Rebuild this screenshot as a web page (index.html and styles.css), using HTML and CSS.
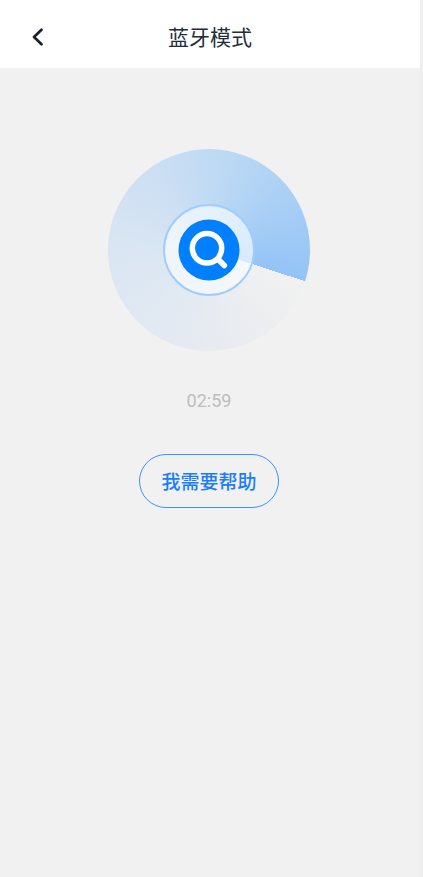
FILE: index.html
```html
<!DOCTYPE html>
<html lang="zh-CN">
<head>
<meta charset="utf-8">
<meta name="viewport" content="width=device-width, initial-scale=1">
<title>蓝牙模式</title>
<link rel="stylesheet" href="styles.css">
</head>
<body>
<div class="screen">
  <header class="bar">
    <button class="back" type="button" aria-label="返回">
      <svg width="12" height="18" viewBox="0 0 12 18" fill="none" stroke="#17202e" stroke-width="2.6" stroke-linecap="round" stroke-linejoin="round"><path d="M9.500 1.700 2 9l7.500 7.300"/></svg>
    </button>
    <h1 class="title">蓝牙模式</h1>
  </header>
  <main class="content">
    <div class="radar">
      <div class="ring">
        <svg class="search" viewBox="0 0 62 62" fill="none">
          <circle cx="31" cy="31" r="30.5" fill="#007fff"/>
          <circle cx="29" cy="29.300" r="14.700" stroke="#fff" stroke-width="5.500"/>
          <path d="M40 40 46.300 46.500" stroke="#fff" stroke-width="5.600" stroke-linecap="round"/>
        </svg>
      </div>
    </div>
    <time class="timer">02:59</time>
    <button class="help" type="button">我需要帮助</button>
  </main>
</div>
</body>
</html>
```
FILE: styles.css
```css
* {
  box-sizing: border-box;
}

body {
  margin: 0;
  background: #eeeeee;
  font-family: "Noto Sans", "Noto Sans CJK SC", sans-serif;
}

.screen {
  min-height: 100vh;
  margin-right: 3px;
  background: #f1f1f1;
}

.bar {
  display: grid;
  grid-template-columns: 76px 1fr 76px;
  align-items: center;
  height: 68px;
  padding-top: 6px;
  background: #fff;
}

.back {
  display: flex;
  align-items: center;
  justify-content: center;
  height: 48px;
  padding: 0;
  border: 0;
  background: none;
}

.title {
  margin: 0;
  color: #222c3a;
  font-size: 21px;
  font-weight: 400;
  line-height: 30px;
  text-align: center;
}

.content {
  display: flex;
  flex-direction: column;
  align-items: center;
  padding: 81px 2px 40px 0;
}

.radar {
  display: grid;
  place-items: center;
  width: 202px;
  height: 202px;
  border-radius: 50%;
  background: conic-gradient(from 108deg, #f1f1f1 0deg, #ebedf0 40deg, #e4eaf2 90deg, #dae6f3 160deg, #cddff3 215deg, #bdd9f4 260deg, #abd0f5 305deg, #93c3f6 360deg);
}

.ring {
  display: grid;
  place-items: center;
  width: 92px;
  height: 92px;
  border: 2px solid #9fcdff;
  border-radius: 50%;
  background: rgba(248, 252, 255, 0.68);
}

.search {
  width: 62px;
  height: 62px;
}

.timer {
  margin-top: 38px;
  color: #bdbdbd;
  font-family: Roboto, sans-serif;
  font-size: 18px;
  line-height: 24px;
}

.help {
  width: 140px;
  height: 54px;
  margin-top: 41px;
  padding: 0;
  border: 1px solid #3b91ff;
  border-radius: 27px;
  background: none;
  color: #1a7dff;
  font-family: "Noto Sans CJK SC", sans-serif;
  font-size: 19px;
  font-weight: 500;
  line-height: 28px;
}
```
